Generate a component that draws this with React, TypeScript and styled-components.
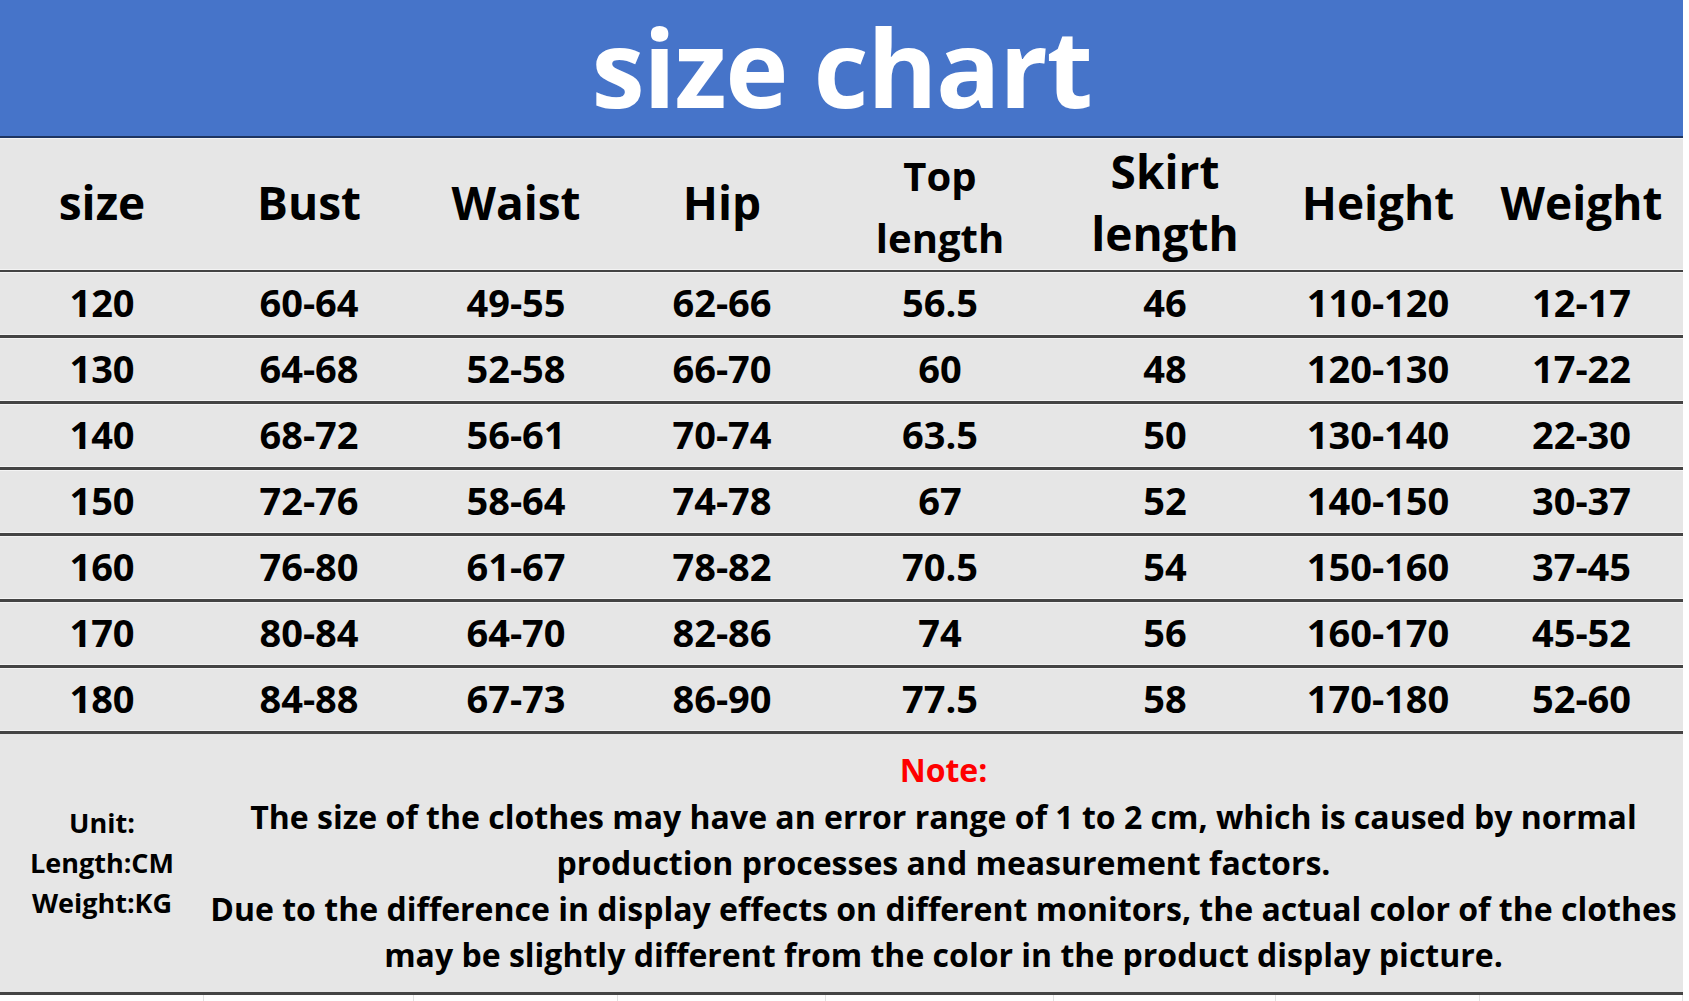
import React from "react";
import styled, { createGlobalStyle } from "styled-components";

const GlobalStyle = createGlobalStyle`
  html, body {
    margin: 0;
    padding: 0;
    background: #ffffff;
  }
  body {
    font-family: "Open Sans", "Noto Sans", "Liberation Sans", sans-serif;
  }
`;

const COLS = "204px 210px 204px 208px 228px 222px 204px 203px";

const Page = styled.div`
  width: 1689px;
  height: 1001px;
  overflow: hidden;
  background: #ffffff;
`;

const Chart = styled.div`
  width: 1683px;
  background: #e6e6e6;
  color: #000;
  font-weight: 700;
`;

const Banner = styled.header`
  box-sizing: border-box;
  height: 138px;
  background: #4674c9;
  border-bottom: 2px solid #1e3561;
  display: flex;
  align-items: center;
  justify-content: center;
  padding-bottom: 2px;
`;

const Title = styled.h1`
  margin: 0;
  color: #ffffff;
  font-size: 107px;
  line-height: 128px;
  font-weight: 700;
  letter-spacing: -1.4px;
`;

const Row = styled.div<{ $head?: boolean }>`
  display: grid;
  grid-template-columns: ${COLS};
  height: ${(p) => (p.$head ? "132px" : "63px")};
  border-bottom: ${(p) => (p.$head ? "2px" : "3px")} solid #444444;
  box-shadow: inset 0 -1px 0 #f4f4f4, inset 0 1px 0 #f4f4f4;
`;

const HeadCell = styled.div<{ $small?: boolean }>`
  display: flex;
  align-items: center;
  justify-content: center;
  text-align: center;
  font-size: ${(p) => (p.$small ? "40px" : "46px")};
  line-height: 62px;
  padding-top: ${(p) => (p.$small ? "6px" : "0px")};
  padding-bottom: ${(p) => (p.$small ? "0px" : "4px")};
`;

const Cell = styled.div`
  display: flex;
  align-items: center;
  justify-content: center;
  font-size: 38px;
  line-height: 1;
  padding-bottom: 4px;
`;

const NoteSection = styled.section`
  display: grid;
  grid-template-columns: 204px 1fr;
  height: 258px;
  border-bottom: 3px solid #444444;
`;

const UnitBlock = styled.div`
  display: flex;
  flex-direction: column;
  align-items: center;
  justify-content: center;
  font-size: 27px;
  line-height: 40px;
`;

const NoteBlock = styled.div`
  display: flex;
  flex-direction: column;
  align-items: center;
  justify-content: center;
  font-size: 32px;
  line-height: 46.3px;
`;

const NoteLine = styled.span<{ $red?: boolean }>`
  white-space: nowrap;
  color: ${(p) => (p.$red ? "#ff0000" : "#000000")};
`;

const Under = styled.div`
  display: grid;
  grid-template-columns: ${COLS};
  height: 6px;
  background: #ffffff;
`;

const Tick = styled.div`
  border-right: 1px solid #e2e2e2;
`;

const headers: { lines: string[]; small?: boolean }[] = [
  { lines: ["size"] },
  { lines: ["Bust"] },
  { lines: ["Waist"] },
  { lines: ["Hip"] },
  { lines: ["Top", "length"], small: true },
  { lines: ["Skirt", "length"] },
  { lines: ["Height"] },
  { lines: ["Weight"] },
];

const rows: string[][] = [
  ["120", "60-64", "49-55", "62-66", "56.5", "46", "110-120", "12-17"],
  ["130", "64-68", "52-58", "66-70", "60", "48", "120-130", "17-22"],
  ["140", "68-72", "56-61", "70-74", "63.5", "50", "130-140", "22-30"],
  ["150", "72-76", "58-64", "74-78", "67", "52", "140-150", "30-37"],
  ["160", "76-80", "61-67", "78-82", "70.5", "54", "150-160", "37-45"],
  ["170", "80-84", "64-70", "82-86", "74", "56", "160-170", "45-52"],
  ["180", "84-88", "67-73", "86-90", "77.5", "58", "170-180", "52-60"],
];

export default function App() {
  return (
    <Page>
      <GlobalStyle />
      <Chart>
        <Banner>
          <Title>size chart</Title>
        </Banner>
        <Row $head>
          {headers.map((h, i) => (
            <HeadCell key={i} $small={h.small}>
              {h.lines.map((line, j) => (
                <React.Fragment key={j}>
                  {j > 0 && <br />}
                  {line}
                </React.Fragment>
              ))}
            </HeadCell>
          ))}
        </Row>
        {rows.map((r, i) => (
          <Row key={i}>
            {r.map((v, j) => (
              <Cell key={j}>{v}</Cell>
            ))}
          </Row>
        ))}
        <NoteSection>
          <UnitBlock>
            <span>Unit:</span>
            <span>Length:CM</span>
            <span>Weight:KG</span>
          </UnitBlock>
          <NoteBlock>
            <NoteLine $red>Note:</NoteLine>
            <NoteLine>
              The size of the clothes may have an error range of 1 to 2 cm, which is caused by normal
            </NoteLine>
            <NoteLine>production processes and measurement factors.</NoteLine>
            <NoteLine>
              Due to the difference in display effects on different monitors, the actual color of the clothes
            </NoteLine>
            <NoteLine>may be slightly different from the color in the product display picture.</NoteLine>
          </NoteBlock>
        </NoteSection>
      </Chart>
      <Under>
        {Array.from({ length: 8 }).map((_, i) => (
          <Tick key={i} />
        ))}
      </Under>
    </Page>
  );
}
